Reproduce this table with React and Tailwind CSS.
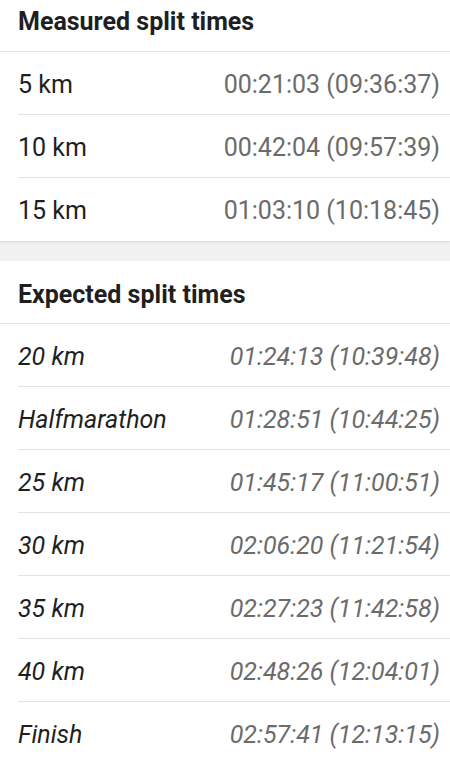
import React from "react";

const measured = [
  ["5 km", "00:21:03 (09:36:37)"],
  ["10 km", "00:42:04 (09:57:39)"],
  ["15 km", "01:03:10 (10:18:45)"],
];

const expected = [
  ["20 km", "01:24:13 (10:39:48)"],
  ["Halfmarathon", "01:28:51 (10:44:25)"],
  ["25 km", "01:45:17 (11:00:51)"],
  ["30 km", "02:06:20 (11:21:54)"],
  ["35 km", "02:27:23 (11:42:58)"],
  ["40 km", "02:48:26 (12:04:01)"],
  ["Finish", "02:57:41 (12:13:15)"],
];

function Row({ label, value, italic, last }) {
  return (
    <div className="pl-[18px]">
      <div
        className={
          "flex h-[63px] items-center justify-between pr-[10px] pt-[3px] " +
          (last ? "" : "border-b border-[#e3e3e3] ") +
          (italic ? "italic" : "")
        }
      >
        <span className="text-[25px] leading-[30px] text-[#1f1f1f]">{label}</span>
        <span className="text-[25px] leading-[30px] text-[#6b6b6b]">{value}</span>
      </div>
    </div>
  );
}

export default function App() {
  return (
    <div
      className="w-[450px] h-[758px] overflow-hidden bg-[#f1f1f1]"
      style={{ fontFamily: "Roboto, 'Liberation Sans', sans-serif" }}
    >
      <div className="bg-white shadow-[0_1px_2px_rgba(0,0,0,0.12)]">
        <div className="flex h-[52px] items-end border-b border-[#e3e3e3] pl-[18px] pb-[14px]">
          <span className="text-[25px] font-bold leading-[30px] text-[#1f1f1f]">
            Measured split times
          </span>
        </div>
        {measured.map(([l, v], i) => (
          <Row key={l} label={l} value={v} last={i === measured.length - 1} />
        ))}
      </div>
      <div className="mt-[20px] bg-white">
        <div className="flex h-[63px] items-end border-b border-[#e3e3e3] pl-[18px] pb-[13px]">
          <span className="text-[25px] font-bold leading-[30px] text-[#1f1f1f]">
            Expected split times
          </span>
        </div>
        {expected.map(([l, v], i) => (
          <Row key={l} label={l} value={v} italic last={i === expected.length - 1} />
        ))}
      </div>
    </div>
  );
}
